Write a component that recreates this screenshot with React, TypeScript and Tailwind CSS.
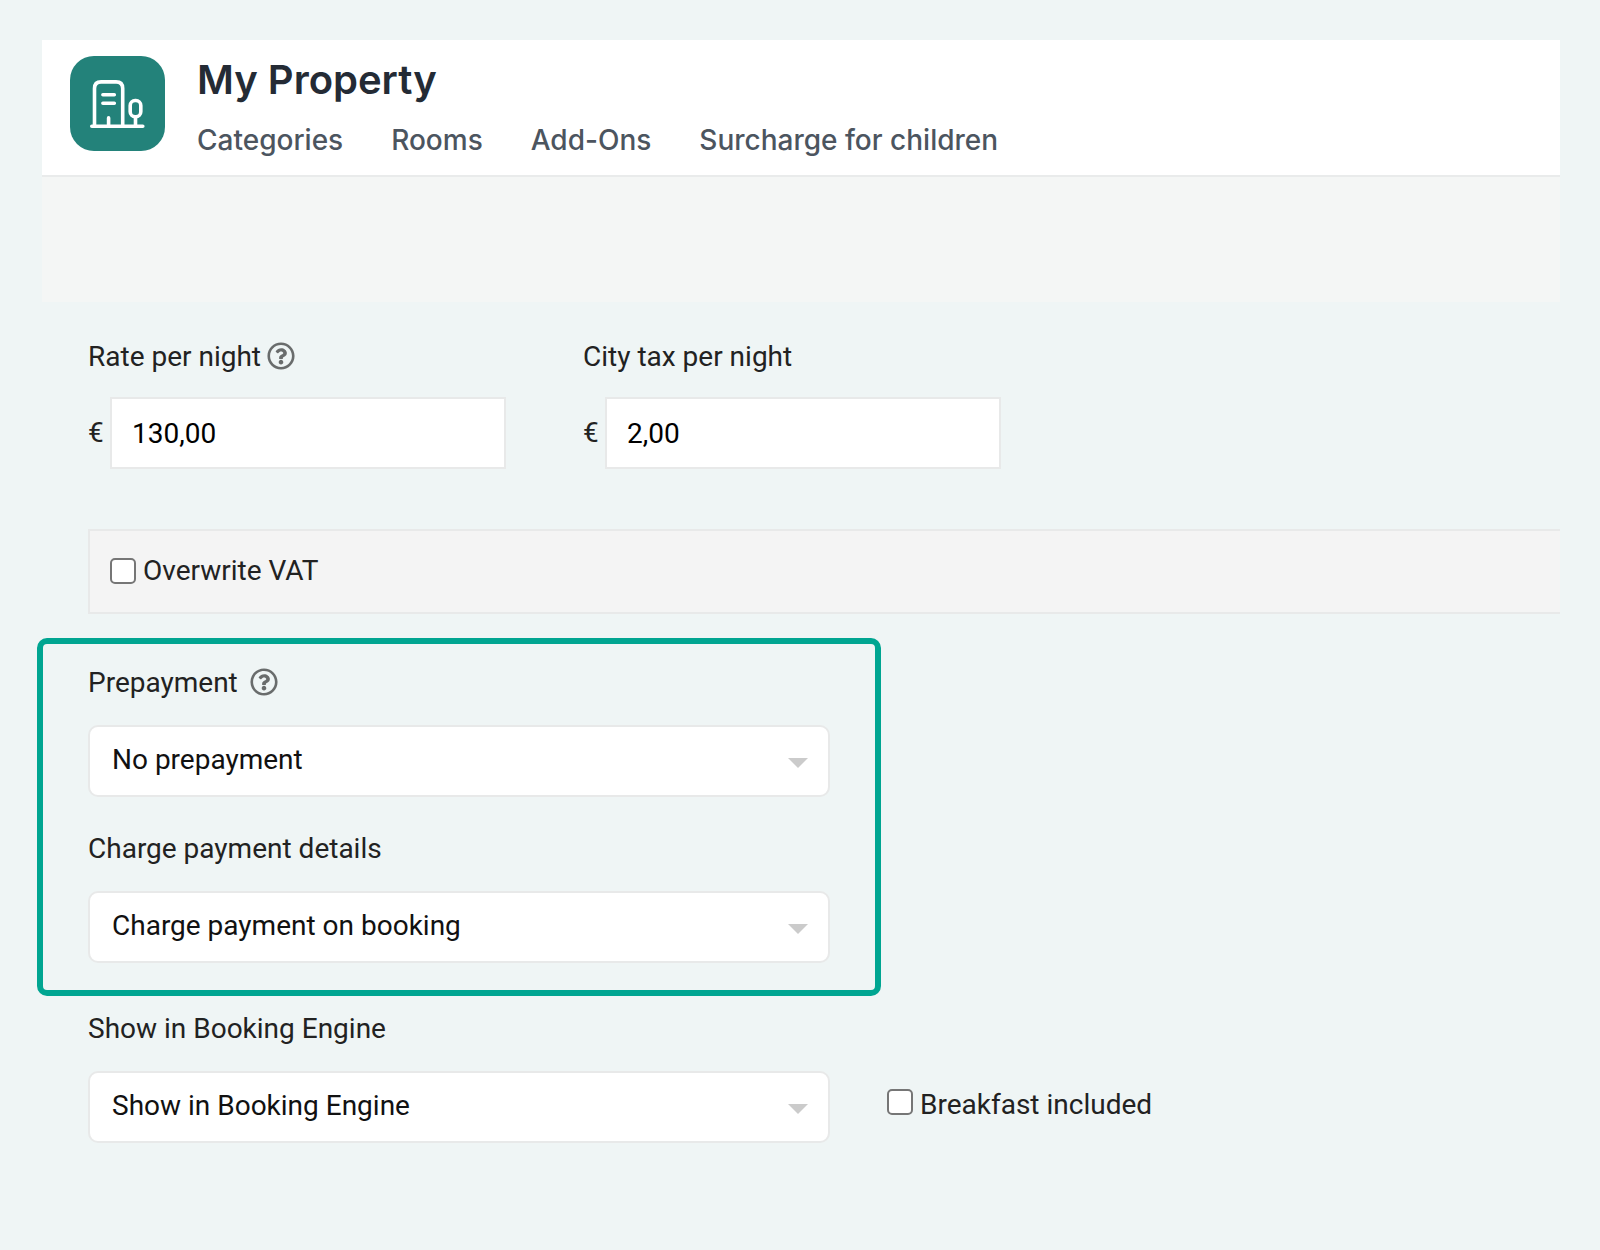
import { useState, type ReactNode } from "react";
import { FaRegQuestionCircle } from "react-icons/fa";

const tabs = ["Categories", "Rooms", "Add-Ons", "Surcharge for children"];

function PropertyLogo() {
  return (
    <div className="size-[95px] shrink-0 rounded-3xl bg-[#23827a]">
      <svg
        viewBox="0 0 95 95"
        className="size-full"
        fill="none"
        stroke="#fff"
        strokeWidth="3.6"
        strokeLinecap="round"
        strokeLinejoin="round"
        aria-hidden="true"
      >
        <path d="M24.5 70.3V32.5q0-6.6 6.6-6.6h15q6.6 0 6.6 6.6v37.8" />
        <path d="M21.8 70.3h51M32.9 38.7h11.4M32.9 47.3h11.4M38.6 70.3v-8.4" />
        <rect x="60.2" y="44.5" width="10.6" height="16.2" rx="5" />
        <path d="M65.5 60.7v9.6" />
      </svg>
    </div>
  );
}

function HelpButton({ label }: { label: string }) {
  return (
    <button type="button" aria-label={label} className="mb-[3px] text-[#696c6c]">
      <FaRegQuestionCircle className="size-7" />
    </button>
  );
}

function AmountField({ id, label, initial, help }: { id: string; label: string; initial: string; help?: ReactNode }) {
  const [value, setValue] = useState(initial);
  return (
    <div className="flex w-full max-w-[418px] flex-col gap-6">
      <div className="flex h-8 items-center gap-1.5">
        <label htmlFor={id}>{label}</label>
        {help}
      </div>
      <div className="flex items-center gap-2">
        <span className="w-[14px]">€</span>
        <input
          id={id}
          type="text"
          value={value}
          onChange={(e) => setValue(e.target.value)}
          className="h-[72px] min-w-0 flex-1 border-2 border-[#e8e9e9] bg-white px-5 text-black outline-none"
        />
      </div>
    </div>
  );
}

function SelectField({ id, label, options, help }: { id: string; label: string; options: string[]; help?: ReactNode }) {
  return (
    <div className="flex w-full max-w-[742px] flex-col gap-[26px]">
      <div className="flex h-8 items-center gap-3">
        <label htmlFor={id}>{label}</label>
        {help}
      </div>
      <div className="relative">
        <select
          id={id}
          className="h-[72px] w-full appearance-none rounded-[10px] border-2 border-[#e8e9e9] bg-white pr-14 pb-0.5 pl-[22px] text-[#111] outline-none"
        >
          {options.map((o) => (
            <option key={o}>{o}</option>
          ))}
        </select>
        <svg
          viewBox="0 0 20 10"
          className="pointer-events-none absolute top-[33px] right-[22px] h-[10px] w-5"
          aria-hidden="true"
        >
          <path d="M0 0h20L10 10z" fill="#cbcbcb" />
        </svg>
      </div>
    </div>
  );
}

function CheckBox({ id }: { id: string }) {
  return (
    <input
      id={id}
      type="checkbox"
      className="size-[26px] shrink-0 appearance-none rounded-[5px] border-2 border-[#767676] bg-white checked:bg-[#23827a]"
    />
  );
}

export default function App() {
  return (
    <div className="min-h-screen bg-[#eff5f5] pt-10 pr-10 pb-24 pl-[42px] font-[Roboto,sans-serif] text-[28px] leading-8 text-[#222]">
      <header className="flex items-start gap-8 border-b-2 border-[#e9ebeb] bg-white px-7 pt-4 pb-[19px] font-[Inter,sans-serif]">
        <PropertyLogo />
        <div>
          <h1 className="text-[40px] leading-[48px] font-semibold text-[#242b35]">My Property</h1>
          <nav className="mt-5 flex gap-12 text-[28px] leading-8 font-medium text-[#4c555f]">
            {tabs.map((t) => (
              <a key={t} href="#">
                {t}
              </a>
            ))}
          </nav>
        </div>
      </header>
      <div className="h-[125px] bg-[#f4f6f5]" />

      <main className="pt-[39px]">
        <div className="flex gap-[77px] pl-[46px]">
          <AmountField id="rate" label="Rate per night" initial="130,00" help={<HelpButton label="About the rate" />} />
          <AmountField id="tax" label="City tax per night" initial="2,00" />
        </div>

        <div className="mt-[60px] ml-[46px] flex items-center gap-[7px] border-y-2 border-l-2 border-[#e8e9e9] bg-[#f4f4f4] px-5 pt-6 pb-[25px]">
          <CheckBox id="vat" />
          <label htmlFor="vat">Overwrite VAT</label>
        </div>

        <section className="mt-6 -ml-[5px] flex w-full max-w-[844px] flex-col gap-9 rounded-[10px] border-[6px] border-[#00a591] px-[45px] pt-[23px] pb-[27px]">
          <SelectField
            id="prepayment"
            label="Prepayment"
            options={["No prepayment", "Full prepayment"]}
            help={<HelpButton label="About prepayment" />}
          />
          <SelectField
            id="charge"
            label="Charge payment details"
            options={["Charge payment on booking", "Charge payment on arrival"]}
          />
        </section>

        <div className="mt-[17px] flex items-end gap-[57px] pl-[46px]">
          <SelectField
            id="engine"
            label="Show in Booking Engine"
            options={["Show in Booking Engine", "Hide in Booking Engine"]}
          />
          <div className="flex shrink-0 items-start gap-[7px] pb-[22px]">
            <CheckBox id="breakfast" />
            <label htmlFor="breakfast">Breakfast included</label>
          </div>
        </div>
      </main>
    </div>
  );
}
